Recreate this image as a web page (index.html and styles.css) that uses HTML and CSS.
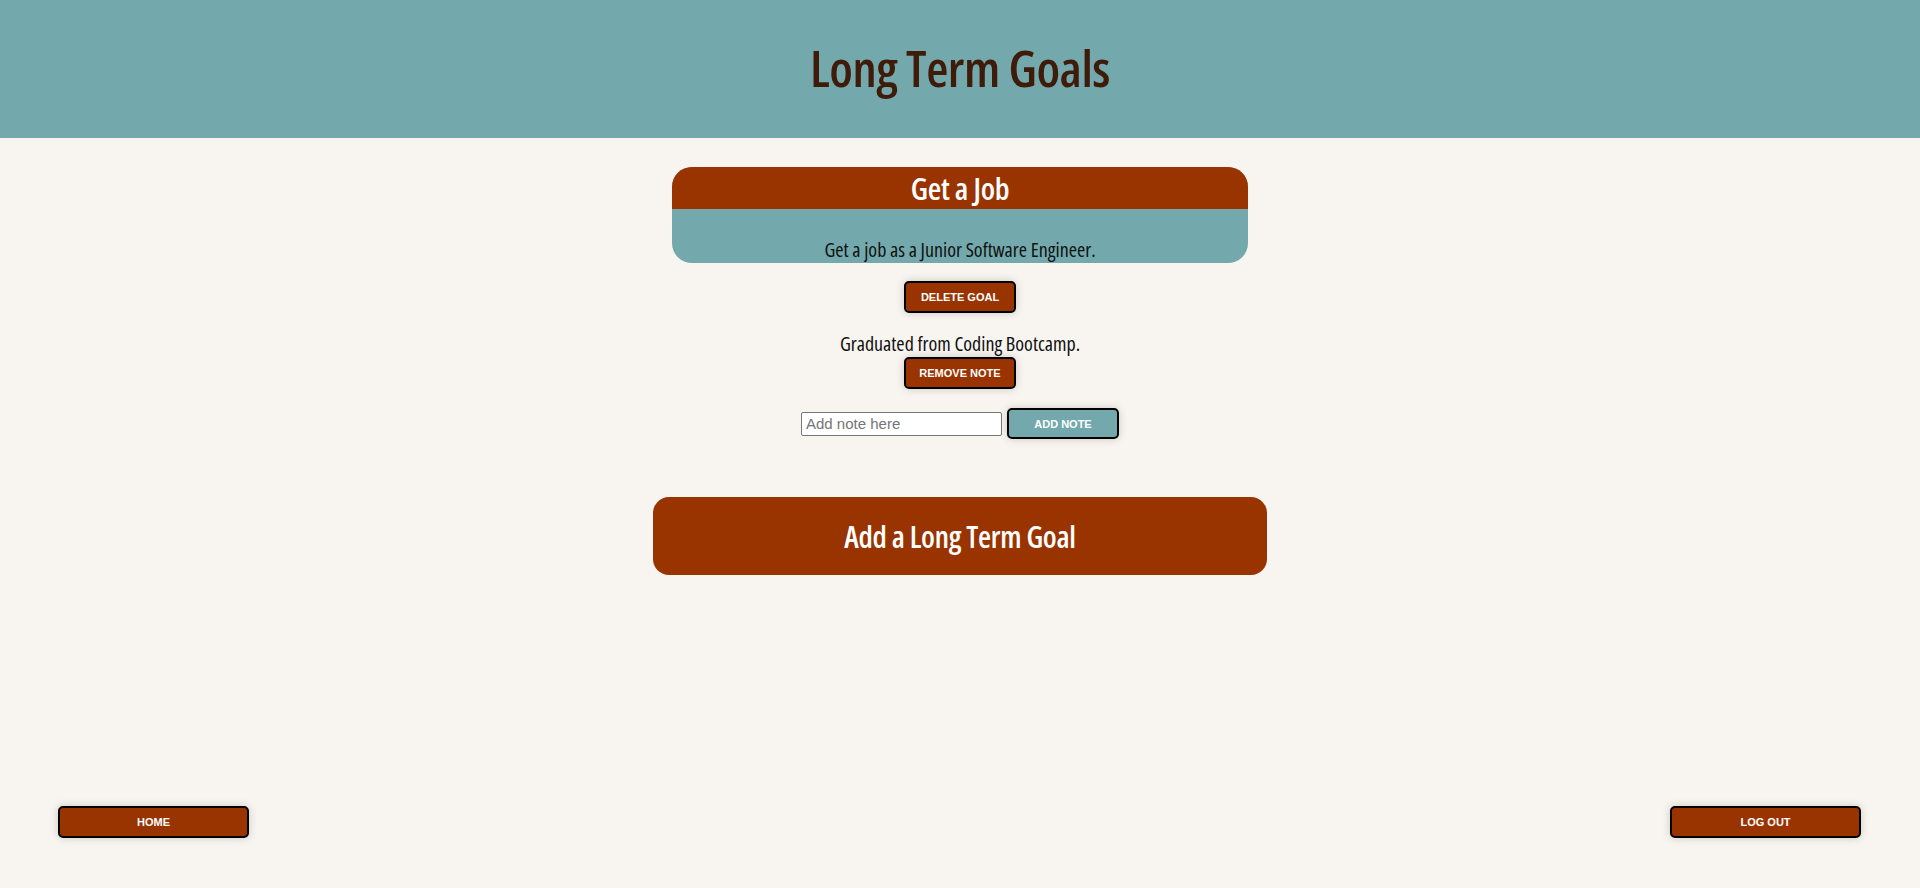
FILE: index.html
```html
<!DOCTYPE html>
<html lang="en">
<head>
<meta charset="utf-8">
<title>Long Term Goals</title>
<link rel="stylesheet" href="styles.css">
</head>
<body>
<div class="page">
  <header class="banner">
    <h1 class="banner-title">Long Term Goals</h1>
  </header>
  <main class="content">
    <section class="goal-card">
      <h2 class="goal-title">Get a Job</h2>
      <div class="goal-body">
        <p class="goal-text">Get a job as a Junior Software Engineer.</p>
      </div>
    </section>
    <button class="btn btn-red btn-small delete-btn">Delete Goal</button>
    <div class="note">
      <p class="note-text">Graduated from Coding Bootcamp.</p>
      <button class="btn btn-red btn-small">Remove Note</button>
    </div>
    <form class="note-form">
      <input class="note-input" type="text" placeholder="Add note here">
      <button type="button" class="btn btn-teal btn-small add-btn">Add Note</button>
    </form>
    <div class="add-goal">
      <h2 class="add-goal-title">Add a Long Term Goal</h2>
    </div>
  </main>
  <footer class="footer">
    <button class="btn btn-red btn-wide">Home</button>
    <button class="btn btn-red btn-wide">Log Out</button>
  </footer>
</div>
</body>
</html>
```

FILE: styles.css
```css
* { box-sizing: border-box; }

html, body {
  margin: 0;
  padding: 0;
  background: #f8f5f0;
}

.page {
  min-height: 100vh;
  display: flex;
  flex-direction: column;
  font-family: "Open Sans", "Roboto Condensed", sans-serif;
  font-stretch: 75%;
}

.banner {
  height: 138px;
  background: #73a9ad;
  display: flex;
  align-items: center;
  justify-content: center;
}

.banner-title {
  margin: 0 0 4px 0;
  font-size: 51px;
  font-weight: 600;
  color: #3f1b0a;
  letter-spacing: -0.5px;
}

.content {
  display: flex;
  flex-direction: column;
  align-items: center;
  padding-top: 29px;
}

.goal-card {
  width: 576px;
  border-radius: 20px;
  overflow: hidden;
  background: #73a9ad;
}

.goal-title {
  margin: 0;
  height: 42px;
  background: #993300;
  color: #ffffff;
  font-size: 31px;
  font-weight: 600;
  text-align: center;
  line-height: 42px;
  letter-spacing: -0.3px;
}

.goal-body {
  height: 54px;
  display: flex;
  align-items: flex-end;
  justify-content: center;
}

.goal-text {
  margin: 0 0 1px 0;
  font-size: 20px;
  font-weight: 500;
  color: #111111;
  line-height: 24px;
}

.btn {
  font-family: "Liberation Sans", Arial, sans-serif;
  font-stretch: normal;
  font-size: 11px;
  font-weight: bold;
  text-transform: uppercase;
  color: #ffffff;
  border: 2px solid #000000;
  border-radius: 5px;
  box-shadow: 0 0 8px rgba(0, 0, 0, 0.18);
  cursor: pointer;
  padding: 0;
}

.btn-red { background: #993300; }
.btn-teal { background: #73a9ad; }

.btn-small {
  width: 112px;
  height: 32px;
}

.btn-wide {
  width: 191px;
  height: 32px;
}

.delete-btn { margin-top: 18px; }

.note {
  margin-top: 19px;
  display: flex;
  flex-direction: column;
  align-items: center;
}

.note-text {
  margin: 0 0 1px 0;
  font-size: 20px;
  font-weight: 500;
  color: #111111;
  line-height: 24px;
}

.note-form {
  margin: 19px 0 0 0;
  display: flex;
  align-items: center;
  gap: 5px;
}

.note-input {
  width: 201px;
  height: 24px;
  border: 1px solid #767676;
  border-radius: 2px;
  padding: 1px 4px;
  font-family: "Liberation Sans", Arial, sans-serif;
  font-stretch: normal;
  font-size: 15px;
  background: #ffffff;
}

.note-input::placeholder { color: #757575; }

.add-btn { height: 31px; }

.add-goal {
  margin-top: 58px;
  width: 614px;
  height: 78px;
  border-radius: 16px;
  background: #993300;
  display: flex;
  align-items: center;
  justify-content: center;
}

.add-goal-title {
  margin: 0;
  color: #ffffff;
  font-size: 30px;
  font-weight: 600;
  letter-spacing: -0.3px;
}

.footer {
  margin-top: auto;
  display: flex;
  justify-content: space-between;
  padding: 0 59px 50px 58px;
}
```
